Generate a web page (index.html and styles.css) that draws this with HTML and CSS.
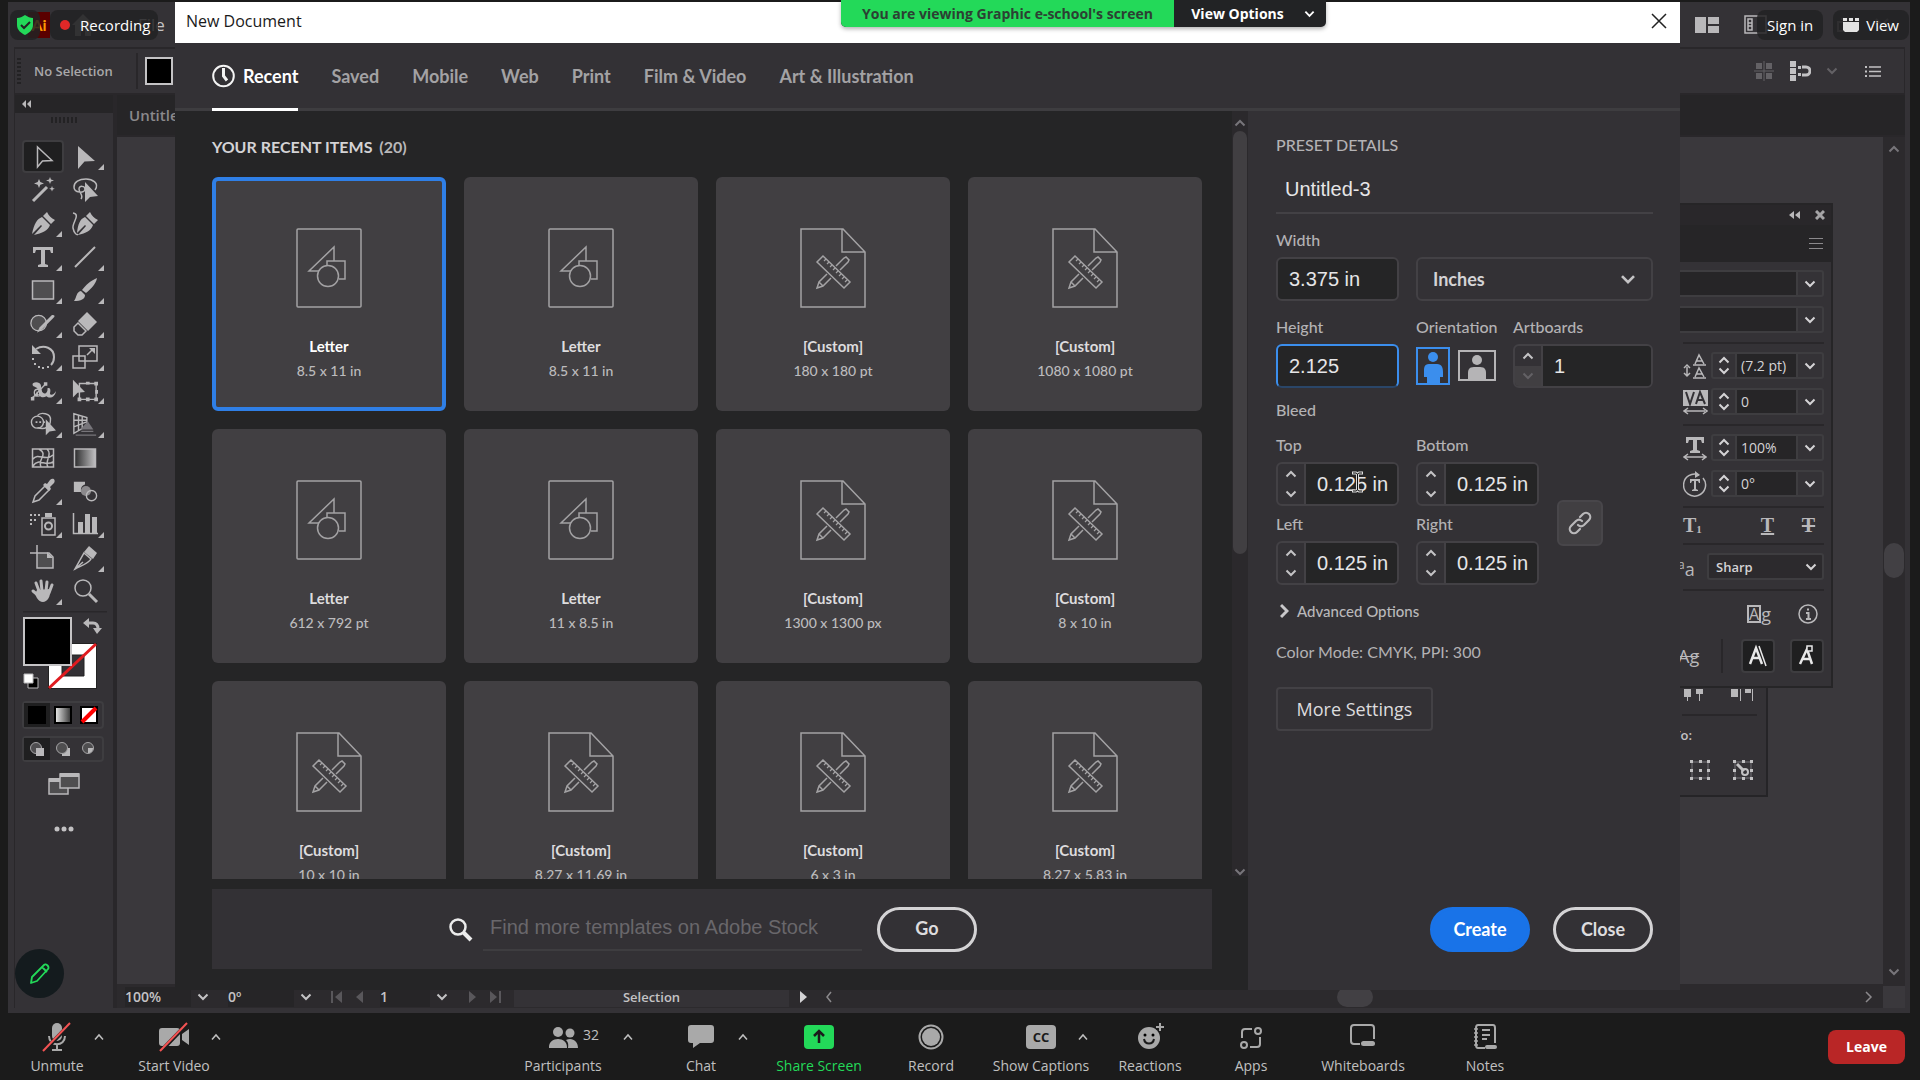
FILE: index.html
```html
<!DOCTYPE html>
<html lang="en">
<head>
<meta charset="utf-8">
<title>New Document</title>
<link rel="stylesheet" href="styles.css">
</head>
<body>
<svg class="sprite" aria-hidden="true">
  <symbol id="up" viewBox="0 0 12 8"><path d="M1.500 6.500 6 2l4.500 4.500" fill="none" stroke="currentColor" stroke-width="2"/></symbol>
  <symbol id="down" viewBox="0 0 12 8"><path d="M1.500 1.500 6 6l4.500-4.500" fill="none" stroke="currentColor" stroke-width="2"/></symbol>
  <symbol id="letter" viewBox="0 0 66 80"><g fill="none" stroke="#a3a2a4" stroke-width="1.500"><rect x="1" y="1" width="64" height="78" rx="1"/><path d="M23 43H13L38 19v14M43 51h6V33H31v5"/><circle cx="32" cy="48" r="10.500"/></g></symbol>
  <symbol id="custom" viewBox="0 0 66 80"><g fill="none" stroke="#a3a2a4" stroke-width="1.500"><path d="M1 1h42l22 23v55H1zM42 1v23h23"/><path d="m17 34 6-6 27 26-6 6z"/><path d="m26 31-2 2m5 1-2 2m5 1-2 2m5 1-2 2m5 1-2 2m5 1-2 2m5 1-2 2m5 1-2 2" stroke-width="1.200"/><path d="m36 38 8-8 2-1 3 3-1 2-8 8M27 46l-8 8-2 6 6-2 8-8M19 54l4 4"/></g></symbol>
  <symbol id="caret" viewBox="0 0 12 8"><path d="M2 6.500 6 2l4 4.500" fill="none" stroke="currentColor" stroke-width="1.500"/></symbol>
</svg>

<main class="share">
  <div class="app">
    <header class="app-head">
      <span class="ai">Ai</span>
      <svg class="home" viewBox="0 0 22 24" width="22" height="24"><path d="M11 1 0 12h3v11h6v-8h4v8h6V12h3z" fill="#8d8b8e"/></svg>
      <a class="file" href="#">File</a>
      <div class="head-right">
        <svg width="24" height="18" viewBox="0 0 24 18" fill="#b9b8ba"><path d="M0 1h11v16H0zM13 1h11v7H13zM13 10h11v7H13z"/></svg>
        <svg class="ml25" width="23" height="20" viewBox="0 0 23 20" fill="none" stroke="#b9b8ba" stroke-width="1.500"><path d="M22 1H1v17h21z"/><path d="M4 4h4v11H4zM4 8h4M4 11h4"/></svg>
        <svg class="win" width="94" height="16" viewBox="0 0 94 16" fill="none" stroke="#77757a" stroke-width="2"><path d="M1 9h13M41 5h10v9H41zM44 2h10v9M79 2l12 12M91 2 79 14"/></svg>
      </div>
    </header>

    <div class="control">
      <span class="grip-v"></span><span class="nosel">No Selection</span><span class="vline"></span><button class="fillbox" aria-label="Fill"></button>
      <div class="ctl-right">
        <svg width="20" height="20" viewBox="0 0 20 20" fill="#636165"><path d="M2 2h6v6H2zM12 2h6v6h-6zM2 12h6v6H2zM12 12h6v6h-6z"/><path d="M10 0v20M0 10h20" stroke="#636165"/></svg>
        <svg width="22" height="20" viewBox="0 0 22 20" fill="#c2c1c3"><path d="M1 0h6v6H1zM1 7h6v6H1zM1 14h6v6H1z"/><path d="M13 6h4a4 4 0 0 1 0 8h-4" fill="none" stroke="#c2c1c3" stroke-width="3"/><path d="M9 5h3v3H9zM9 12h3v3H9z"/></svg>
        <svg class="dim" width="12" height="8"><use href="#down"/></svg>
        <svg class="ml20" width="17" height="13" viewBox="0 0 17 13"><path d="M4 2h12M4 6.500h12M4 11h12" stroke="#c2c1c3" stroke-width="1.500"/><path d="M0 1h2v2H0zM0 5.500h2v2H0zM0 10h2v2H0z" fill="#c2c1c3"/></svg>
      </div>
    </div>

    <div class="work">
      <aside class="tools">
        <div class="tools-top"><svg width="10" height="8" viewBox="0 0 10 8" fill="#b9b8ba"><path d="M4 0v8L0 4zM9 0v8L5 4z"/></svg></div>
        <span class="grip-h"></span>
        <div class="toolgrid">
          <button class="tool on" aria-label="Selection"><svg viewBox="0 0 26 26"><path d="M7.500 3v20l5-6 9.500-.5z" class="l"/></svg></button>
          <button class="tool fly" aria-label="Direct selection"><svg viewBox="0 0 26 26"><path d="M6 2v23l6.500-7.500L23 17z"/></svg></button>
          <button class="tool" aria-label="Magic wand"><svg viewBox="0 0 26 26"><path d="M3 24 17 10" class="l w3"/><path d="m9 2 1.300 3L14 6.500l-3.700 1.300L9 11l-1.300-3.200L4 6.500 7.700 5zM20 0l1 2.500 3 1-3 1L20 7l-1-2.500-3-1 3-1zM22 9l.8 2 2 .8-2 .8-.8 2-.8-2-2-.8 2-.8z"/></svg></button>
          <button class="tool" aria-label="Lasso"><svg viewBox="0 0 26 26"><path d="M23 13c5-7-3-11-9-11C7 2 2 5 2 10c0 6 11 7 11 2 0-3-6-4-6 0s5 6 2 10" class="l"/><path d="M13 5v20l5-5 8-1z"/></svg></button>
          <button class="tool fly" aria-label="Pen"><svg viewBox="0 0 26 26"><path d="M17 1c2 4 4 6 8 8l-4 4-8-8zM12 6l8 8c-2 6-8 8-16 10l8-9-1-1-9 9C4 13 7 8 12 6z"/></svg></button>
          <button class="tool" aria-label="Curvature"><svg viewBox="0 0 26 26"><path d="M18 1c2 4 4 6 8 8l-4 4-8-8zM13 6l8 8c-2 6-7 8-15 10l8-9-1-1-8 8C6 13 8 8 13 6z"/><path d="M1 2c8 1-1 10 0 15s4 8 5 6" class="l"/></svg></button>
          <button class="tool fly" aria-label="Type"><svg viewBox="0 0 26 26"><path d="M3 3h20v6h-2l-1-3h-5v14l3 1v2H8v-2l3-1V6H6L5 9H3z"/></svg></button>
          <button class="tool fly" aria-label="Line"><svg viewBox="0 0 26 26"><path d="M3 23 23 3" class="l w2"/></svg></button>
          <button class="tool fly" aria-label="Rectangle"><svg viewBox="0 0 26 26"><path d="M2.500 4h21v18h-21z" class="l g"/></svg></button>
          <button class="tool fly" aria-label="Brush"><svg viewBox="0 0 26 26"><path d="M25 1c-1 6-6 11-11 15l-4-3c4-5 8-9 15-12zM9 14l4 4c0 4-4 6-11 6 3-4 2-9 7-10z"/></svg></button>
          <button class="tool fly" aria-label="Shaper"><svg viewBox="0 0 30 26"><circle cx="10" cy="12" r="9" class="l g"/><path d="M28 5 14 19l-6 4 3-6L25 3c2-1 4 0 3 2z"/></svg></button>
          <button class="tool fly" aria-label="Eraser"><svg viewBox="0 0 26 26"><path d="m15 1 10 10-9 9L6 10z"/><path d="m6 12 8 8-4 4H6l-4-4v-4z" class="l"/></svg></button>
          <button class="tool fly" aria-label="Rotate"><svg viewBox="0 0 26 26"><path d="M6 5c8-5 18-1 18 8 0 4-1 6-3 8" class="l w2"/><path d="M2 1v9h9zM2 14h2v2H2zM4 19h2v2H4zM8 22h2v2H8zM12 23h2v2h-2zM17 22h2v2h-2z"/></svg></button>
          <button class="tool fly" aria-label="Scale"><svg viewBox="0 0 26 26"><path d="M7 2h18v15H7zM1 12h12v12H1zM15 11l5-5" class="l"/><path d="M17 4h6v6z"/></svg></button>
          <button class="tool fly" aria-label="Width"><svg viewBox="0 0 30 26"><path d="M3 19c9 2 8-4 6-8S4 9 3 6s5-4 8-2 1 8 4 11 6-2 5-5c4-2 4 3 3 6 1 3 5 1 7-3-1 8-8 9-11 6-6 4-10-2-11-6-1 5-2 7-5 7z"/><circle cx="9" cy="15" r="4" class="l"/><path d="m2 22 16-17" class="l"/><path d="M1 20h4v4H1zM16 3h4v4h-4z"/></svg></button>
          <button class="tool fly" aria-label="Free transform"><svg viewBox="0 0 28 26"><path d="M8 5h18v17H8z" class="l"/><path d="M1 1v19l5-5 8-1zM24 3h4v4h-4zM24 20h4v4h-4zM15 3h4v3h-4zM15 20h4v4h-4zM6 20h4v4H6zM25 12h3v4h-3z"/></svg></button>
          <button class="tool fly" aria-label="Shape builder"><svg viewBox="0 0 28 26"><circle cx="8" cy="11" r="6.500" class="l"/><path d="M8 4c3-4 15-3 14 5 0 6-5 11-14 8" class="l"/><path d="M6 10h2v2H6zM10 10h2v2h-2zM14 10h2v2h-2zM17 8v17l4-4 7-1z"/></svg></button>
          <button class="tool fly" aria-label="Perspective grid"><svg viewBox="0 0 28 26"><path d="M2 2v21l14-8V6zM2 9h14M2 16l13-5M7 3v17M11 4v14" class="l"/><path d="M17 10 9 19h14z" fill="#77757a"/><path d="M10 21h13M4 25h22" stroke="#77757a" stroke-width="1.500"/></svg></button>
          <button class="tool" aria-label="Mesh"><svg viewBox="0 0 26 26"><path d="M2.500 4h21v18h-21zM3 14c5-7 13 3 20-4M3 21c6-9 12 1 20-4M9 4c10 6-2 10 2 18M17 4c6 6-3 12 1 18" class="l"/></svg></button>
          <button class="tool" aria-label="Gradient"><svg viewBox="0 0 26 26"><defs><linearGradient id="gr"><stop stop-color="#2b2b2c"/><stop offset="1" stop-color="#c2c1c3"/></linearGradient></defs><path d="M2.500 4h21v18h-21z" fill="url(#gr)" stroke="#b9b8ba" stroke-width="1.500"/></svg></button>
          <button class="tool fly" aria-label="Eyedropper"><svg viewBox="0 0 26 26"><path d="m15 8 4 4L9 22l-6 2 2-6z" class="l"/><path d="m13 7 2-2 2 1 3-4c3-3 6 0 4 3l-4 4 1 2-2 2z"/></svg></button>
          <button class="tool" aria-label="Blend"><svg viewBox="0 0 28 26"><path d="M2 3h12v3c-4 1-5 5-4 8H2z"/><circle cx="15" cy="13" r="5.500" fill="#8b898c"/><circle cx="21" cy="18" r="5.500" class="l"/></svg></button>
          <button class="tool fly" aria-label="Symbol sprayer"><svg viewBox="0 0 26 26"><path d="M12 7h13v17H12z" class="l"/><path d="M15 2h7v4h-7zM0 3h2v2H0zM4 3h2v2H4zM8 3h2v2H8zM0 8h2v2H0zM4 8h2v2H4zM0 12h2v2H0z"/><circle cx="18.500" cy="15" r="3.500" class="l w2"/></svg></button>
          <button class="tool fly" aria-label="Graph"><svg viewBox="0 0 26 26"><path d="M1.500 2v20.500H26" class="l"/><path d="M6 11h5v11H6zM13 3h5v19h-5zM20 6h5v16h-5z"/></svg></button>
          <button class="tool" aria-label="Artboard"><svg viewBox="0 0 26 26"><path d="M7 8h12l4 4v11H7z" class="l g"/><path d="M0 8h7M7 0v8" class="l"/><path d="M17 7v6h6z"/></svg></button>
          <button class="tool fly" aria-label="Slice"><svg viewBox="0 0 26 26"><path d="m12 8 7 6c-2 4-8 6-16 10L12 8zM3 24l8-7" class="l"/><path d="M17 1 25 8l-4 6-9-7z"/></svg></button>
          <button class="tool fly" aria-label="Hand"><svg viewBox="0 0 26 26"><path d="M9 13 6 5" class="l w3 r"/><path d="M12 13 11 3M16 13l1-9M19 15l3-8M9 18l-6-5" class="l w3 r"/><path d="m7 12 13-1c1 8-3 13-7 13-5 0-7-6-8-8z"/></svg></button>
          <button class="tool" aria-label="Zoom"><svg viewBox="0 0 26 26"><circle cx="11" cy="10" r="8" class="l"/><path d="m17 16 8 8" class="l w3"/></svg></button>
        </div>
        <svg class="swatches" viewBox="0 0 84 78" width="84" height="78">
          <path d="M0 0h84" stroke="#29272a" stroke-width="3"/>
          <path d="M25 32h49v46H25z" fill="#222"/><path d="M26 33h47v44H26z" fill="#fff"/><path d="M39 44h22v21H39z" fill="#333135" stroke="#222"/><path d="M26 77 73 33" stroke="#e01b1f" stroke-width="3"/>
          <path d="M1 7h47v47H1z" fill="#000" stroke="#c5c4c6" stroke-width="2"/>
          <path d="M64 12h6c4 0 5 3 5 6" fill="none" stroke="#b9b8ba" stroke-width="3"/><path d="M60 12l6-5v10zM70 17h9l-5 6z" fill="#b9b8ba"/>
          <path d="M5 67h10v10H5z" fill="#000" stroke="#b9b8ba" stroke-width="1"/><path d="M1 63h9v9H1z" fill="#fff" stroke="#b9b8ba"/>
        </svg>
        <div class="seg seg-color">
          <button class="on" aria-label="Color"><svg width="18" height="18"><path d="M0 0h18v18H0z" fill="#000"/></svg></button>
          <button aria-label="Gradient fill"><svg width="18" height="18"><defs><linearGradient id="gw"><stop stop-color="#eee"/><stop offset="1" stop-color="#333"/></linearGradient></defs><path d="M1 1h16v16H1z" fill="url(#gw)" stroke="#000" stroke-width="2"/></svg></button>
          <button aria-label="None"><svg width="18" height="18"><path d="M1 1h16v16H1z" fill="#fff" stroke="#000" stroke-width="2"/><path d="M2 16 16 2" stroke="#f00" stroke-width="4"/></svg></button>
        </div>
        <div class="seg seg-draw">
          <button class="on" aria-label="Draw normal"><svg width="16" height="16"><circle cx="7" cy="7" r="5.500" fill="#4f4e50" stroke="#a5a4a6"/><path d="M7 7h8v8H7z" fill="#b9b8ba"/></svg></button>
          <button aria-label="Draw behind"><svg width="16" height="16"><path d="M7 7h8v8H7z" fill="#b9b8ba"/><circle cx="7" cy="7" r="5.500" fill="#4f4e50" stroke="#a5a4a6"/></svg></button>
          <button aria-label="Draw inside"><svg width="16" height="16"><circle cx="7" cy="7" r="5.500" fill="#4f4e50" stroke="#a5a4a6"/><path d="M7 7h5c0 3-2 5-5 5z" fill="#b9b8ba"/></svg></button>
        </div>
        <button class="screenmode" aria-label="Screen mode"><svg width="32" height="24" viewBox="0 0 32 24"><path d="M1 7h19v15H1z" fill="#4f4e50" stroke="#b9b8ba" stroke-width="1.500"/><path d="M1 6h19v4H1z" fill="#b9b8ba"/><path d="M12 2h19v14H12z" fill="#4f4e50" stroke="#b9b8ba" stroke-width="1.500"/><path d="M12 1h19v4H12z" fill="#b9b8ba"/></svg></button>
        <button class="dots" aria-label="Edit toolbar"><svg width="20" height="6" fill="#c2c1c3"><circle cx="3" cy="3" r="2.500"/><circle cx="10" cy="3" r="2.500"/><circle cx="17" cy="3" r="2.500"/></svg></button>
      </aside>

      <section class="doc">
        <div class="doc-tabs">Untitled-2</div>
        <div class="doc-main">
          <div class="canvas"></div>
          <div class="vscroll"><svg class="dim2" width="12" height="8"><use href="#up"/></svg><span></span><svg class="dim2" width="12" height="8"><use href="#down"/></svg></div>
        </div>
        <footer class="status">
          <input class="s-zoom" value="100%" aria-label="Zoom level"><button class="s-dd" aria-label="Zoom list"><svg width="12" height="8"><use href="#down"/></svg></button>
          <input class="s-rot" value="0º" aria-label="Rotation"><button class="s-dd" aria-label="Rotation list"><svg width="12" height="8"><use href="#down"/></svg></button>
          <svg class="s-nav" width="62" height="14" fill="#59575b"><path d="M13 1h2v12h-2zM24 1v12l-7-6zM45 1v12l-7-6z"/></svg>
          <input class="s-page" value="1" aria-label="Artboard number"><button class="s-dd" aria-label="Artboard list"><svg width="12" height="8"><use href="#down"/></svg></button>
          <svg class="s-nav" width="60" height="14" fill="#59575b"><path d="M15 1v12l7-6zM36 1v12l7-6zM45 1h2v12h-2z"/></svg>
          <span class="s-label">Selection</span>
          <svg width="28" height="14" fill="#d4d3d5"><path d="M11 1v12l7-6z"/></svg>
          <svg width="24" height="14" fill="none" stroke="#8b898c" stroke-width="1.500"><path d="m14 2-4 5 4 5"/></svg>
          <span class="hthumb"></span>
          <svg width="14" height="14" fill="none" stroke="#8b898c" stroke-width="1.500"><path d="m5 2 5 5-5 5"/></svg>
          <span class="corner"></span>
        </footer>
      </section>
    </div>
  </div>

  <section class="align-panel">
    <svg width="76" height="12" fill="#b9b8ba"><path d="M2 0h7v8H2zM5 8h1v4H5zM14 0h7v5h-7zM17 5h1v7h-1zM49 0h7v8h-7zM58 0h1v12h-1zM63 0h6v4h-6zM70 0h1v12h-1z"/></svg>
    <hr>
    <span class="alignto">Align To:</span>
    <div class="align-row">
      <svg width="20" height="20" viewBox="0 0 20 20"><path d="M2 2h16v16H2z" fill="none" stroke="#77757a"/><path d="M0 0h3v3H0zM9 0h3v3H9zM17 0h3v3h-3zM0 9h3v3H0zM9 9h3v3H9zM17 9h3v3h-3zM0 17h3v3H0zM9 17h3v3H9zM17 17h3v3h-3z" fill="#c2c1c3"/></svg>
      <svg width="20" height="20" viewBox="0 0 20 20"><path d="M2 2h16v16H2z" fill="none" stroke="#77757a"/><path d="M0 0h3v3H0zM9 0h3v3H9zM17 0h3v3h-3zM0 9h3v3H0zM17 9h3v3h-3zM0 17h3v3H0zM9 17h3v3H9zM17 17h3v3h-3z" fill="#c2c1c3"/><path d="m4 4 7 7" stroke="#c2c1c3" stroke-width="3"/><circle cx="12" cy="12" r="3" fill="none" stroke="#c2c1c3" stroke-width="2"/></svg>
    </div>
  </section>

  <section class="char-panel">
    <div class="cp-top"><svg width="11" height="8" viewBox="0 0 11 8" fill="#b9b8ba"><path d="M5 0v8L0 4zM11 0v8L6 4z"/></svg><svg width="10" height="10" viewBox="0 0 10 10" stroke="#a5a4a6" stroke-width="3"><path d="m1 1 8 8M9 1 1 9"/></svg></div>
    <div class="cp-tabs"><svg width="14" height="11" stroke="#8b898c"><path d="M0 .5h14M0 5.500h14M0 10.500h14"/></svg></div>
    <div class="cp-body">
      <div class="combo wide"><input aria-label="Font family"><button aria-label="Font family list"><svg width="12" height="8"><use href="#down"/></svg></button></div>
      <div class="combo wide"><input aria-label="Font style"><button aria-label="Font style list"><svg width="12" height="8"><use href="#down"/></svg></button></div>
      <hr>
      <div class="cp-row"><svg width="24" height="26" fill="none" stroke="#b9b8ba" stroke-width="1.500"><path d="M10 12h13M10 25h13M12 11l4-9 5 9M13 8h7M12 24l4-9 5 9M13 21h7M4 14v8M1 15l3-3 3 3M1 20l3 3 3-3"/></svg>
        <div class="combo"><span class="arr"><button aria-label="More leading"><svg width="12" height="8"><use href="#up"/></svg></button><button aria-label="Less leading"><svg width="12" height="8"><use href="#down"/></svg></button></span><input value="(7.2 pt)" aria-label="Leading"><button aria-label="Leading list"><svg width="12" height="8"><use href="#down"/></svg></button></div></div>
      <div class="cp-row"><svg width="25" height="26" fill="none" stroke="#b9b8ba" stroke-width="1.500"><path d="M0 1h25v16H0z" fill="#b9b8ba" stroke="none"/><path d="m3 3 4 12 4-12M13 15l4-12 5 12M14 11h6" stroke="#333135" stroke-width="2"/><path d="M2 22h20M5 19l-4 3 4 3M20 19l4 3-4 3"/></svg>
        <div class="combo"><span class="arr"><button aria-label="More tracking"><svg width="12" height="8"><use href="#up"/></svg></button><button aria-label="Less tracking"><svg width="12" height="8"><use href="#down"/></svg></button></span><input value="0" aria-label="Tracking"><button aria-label="Tracking list"><svg width="12" height="8"><use href="#down"/></svg></button></div></div>
      <hr>
      <div class="cp-row"><svg width="24" height="26" fill="#b9b8ba"><path d="M3 2h18v6h-2l-1-3h-4v10l3 1v2H7v-2l3-1V5H6L5 8H3z"/><path d="M2 22h20M5 19l-4 3 4 3M19 19l4 3-4 3" fill="none" stroke="#b9b8ba" stroke-width="1.500"/></svg>
        <div class="combo"><span class="arr"><button aria-label="Wider"><svg width="12" height="8"><use href="#up"/></svg></button><button aria-label="Narrower"><svg width="12" height="8"><use href="#down"/></svg></button></span><input value="100%" aria-label="Horizontal scale"><button aria-label="Scale list"><svg width="12" height="8"><use href="#down"/></svg></button></div></div>
      <div class="cp-row"><svg width="24" height="26" fill="#b9b8ba"><path d="M7 8h10v4h-1l-1-2h-2v8l2 1v1H9v-1l2-1v-8H9l-1 2H7z"/><path d="M16 4A11 11 0 1 0 20 7" fill="none" stroke="#b9b8ba" stroke-width="1.500"/><path d="M12 0v7l5-3z"/></svg>
        <div class="combo"><span class="arr"><button aria-label="Rotate up"><svg width="12" height="8"><use href="#up"/></svg></button><button aria-label="Rotate down"><svg width="12" height="8"><use href="#down"/></svg></button></span><input value="0°" aria-label="Character rotation"><button aria-label="Rotation angles"><svg width="12" height="8"><use href="#down"/></svg></button></div></div>
      <hr>
      <div class="cp-type"><button aria-label="Subscript">T<sub>1</sub></button><button class="und" aria-label="Underline">T</button><button class="strike" aria-label="Strikethrough">T</button></div>
      <hr>
      <div class="cp-aa"><span class="aa"><sup>a</sup>a</span><span class="selwrap sharp"><select aria-label="Anti-aliasing"><option>Sharp</option></select><svg width="12" height="8"><use href="#down"/></svg></span></div>
      <hr>
      <div class="cp-snap"><span class="ag"><b>A</b>g</span><svg width="20" height="20" fill="none" stroke="#b9b8ba" stroke-width="1.500"><circle cx="10" cy="10" r="9"/><path d="M8 9h2.500v6M8 15h5M9 5.500h2" stroke-width="2"/></svg></div>
      <div class="cp-glyph"><span class="ag2">Ag</span><i></i><button aria-label="Snap to angular guides"><svg width="22" height="24" fill="none" stroke="#e8e8e8" stroke-width="2.500"><path d="m3 20 6-16 6 16M5 14h8"/><path d="m12 2 7 20" stroke-width="1.500"/></svg></button><button aria-label="Snap to anchor"><svg width="22" height="24" fill="none" stroke="#e8e8e8" stroke-width="2.500"><path d="m4 20 7-15 5 15M7 15h8"/><path d="M11 2h5v5h-5z" fill="#1f1f20" stroke-width="1.500"/></svg></button></div>
    </div>
  </section>

  <section class="dialog" role="dialog" aria-label="New Document">
    <div class="d-title"><span>New Document</span><button aria-label="Close dialog"><svg width="16" height="16" stroke="#222" stroke-width="1.500"><path d="m1 1 14 14M15 1 1 15"/></svg></button></div>
    <nav class="d-tabs">
      <a class="active" href="#"><svg width="23" height="24" viewBox="0 0 23 24" fill="none" stroke="#f4f4f4" stroke-width="2"><circle cx="11.500" cy="12" r="10.300"/><path d="M11.500 4v8l3.500 4.500" stroke-width="3"/></svg>Recent</a>
      <a href="#">Saved</a><a href="#">Mobile</a><a href="#">Web</a><a href="#">Print</a><a href="#">Film &amp; Video</a><a href="#">Art &amp; Illustration</a>
    </nav>
    <div class="d-body">
      <div class="d-left">
        <div class="recent">
          <h2>YOUR RECENT ITEMS <span>(20)</span></h2>
          <div class="cards">
            <button class="card sel"><svg width="66" height="80"><use href="#letter"/></svg><b>Letter</b><span>8.5 x 11 in</span></button>
            <button class="card"><svg width="66" height="80"><use href="#letter"/></svg><b>Letter</b><span>8.5 x 11 in</span></button>
            <button class="card"><svg width="66" height="80"><use href="#custom"/></svg><b>[Custom]</b><span>180 x 180 pt</span></button>
            <button class="card"><svg width="66" height="80"><use href="#custom"/></svg><b>[Custom]</b><span>1080 x 1080 pt</span></button>
            <button class="card"><svg width="66" height="80"><use href="#letter"/></svg><b>Letter</b><span>612 x 792 pt</span></button>
            <button class="card"><svg width="66" height="80"><use href="#letter"/></svg><b>Letter</b><span>11 x 8.5 in</span></button>
            <button class="card"><svg width="66" height="80"><use href="#custom"/></svg><b>[Custom]</b><span>1300 x 1300 px</span></button>
            <button class="card"><svg width="66" height="80"><use href="#custom"/></svg><b>[Custom]</b><span>8 x 10 in</span></button>
            <button class="card"><svg width="66" height="80"><use href="#custom"/></svg><b>[Custom]</b><span>10 x 10 in</span></button>
            <button class="card"><svg width="66" height="80"><use href="#custom"/></svg><b>[Custom]</b><span>8.27 x 11.69 in</span></button>
            <button class="card"><svg width="66" height="80"><use href="#custom"/></svg><b>[Custom]</b><span>6 x 3 in</span></button>
            <button class="card"><svg width="66" height="80"><use href="#custom"/></svg><b>[Custom]</b><span>8.27 x 5.83 in</span></button>
          </div>
          <form class="stock">
            <svg width="26" height="26" fill="none" stroke="#ececec"><circle cx="11" cy="11" r="7.500" stroke-width="2.500"/><path d="m16 16 8 8" stroke-width="4"/></svg>
            <input type="text" placeholder="Find more templates on Adobe Stock" aria-label="Find templates">
            <button type="button" class="pill">Go</button>
          </form>
        </div>
        <div class="lscroll"><svg class="dim2" width="12" height="8"><use href="#up"/></svg><span></span><svg class="dim2" width="12" height="8"><use href="#down"/></svg></div>
      </div>

      <form class="preset">
        <h2>PRESET DETAILS</h2>
        <input class="docname" type="text" value="Untitled-3" aria-label="Document name">
        <div class="frow r1">
          <div class="fld"><label for="w">Width</label><input id="w" class="box" value="3.375 in"></div>
          <span class="selwrap units"><select aria-label="Units"><option>Inches</option></select><svg width="16" height="11"><use href="#down"/></svg></span>
        </div>
        <div class="frow r2">
          <div class="fld"><label for="h">Height</label><input id="h" class="box focus" value="2.125"></div>
          <div class="orient"><span class="lab">Orientation</span><div>
            <button type="button" aria-label="Portrait"><svg width="34" height="38"><path d="M1 1h32v36H1z" fill="none" stroke="#3b8eed" stroke-width="2"/><circle cx="17" cy="10" r="5" fill="#3b8eed"/><path d="M13 17h8c5 0 6 4 6 8v5h-3v7H11v-7H8v-5c0-4 0-8 5-8z" fill="#3b8eed"/></svg></button>
            <button type="button" aria-label="Landscape"><svg width="38" height="32"><path d="M1 1h36v29H1z" fill="none" stroke="#b5b4b6" stroke-width="2"/><circle cx="19" cy="10" r="5" fill="#b5b4b6"/><path d="M16 17h6c5 0 6 3 6 6v7H10v-7c0-3 1-6 6-6z" fill="#b5b4b6"/></svg></button></div></div>
          <div class="fld boards"><label for="ab">Artboards</label><div class="spin"><span class="arr"><button type="button" aria-label="More artboards"><svg width="12" height="8"><use href="#up"/></svg></button><button type="button" class="off" aria-label="Fewer artboards" disabled><svg width="12" height="8"><use href="#down"/></svg></button></span><input id="ab" value="1"></div></div>
        </div>
        <span class="lab bleed">Bleed</span>
        <div class="bleeds">
          <div class="bgrid">
            <div class="fld"><label for="bt">Top</label><div class="spin"><span class="arr"><button type="button" aria-label="Top up"><svg width="12" height="8"><use href="#up"/></svg></button><button type="button" aria-label="Top down"><svg width="12" height="8"><use href="#down"/></svg></button></span><input id="bt" value="0.125 in"></div></div>
            <div class="fld"><label for="bb">Bottom</label><div class="spin"><span class="arr"><button type="button" aria-label="Bottom up"><svg width="12" height="8"><use href="#up"/></svg></button><button type="button" aria-label="Bottom down"><svg width="12" height="8"><use href="#down"/></svg></button></span><input id="bb" value="0.125 in"></div></div>
            <div class="fld"><label for="bl">Left</label><div class="spin"><span class="arr"><button type="button" aria-label="Left up"><svg width="12" height="8"><use href="#up"/></svg></button><button type="button" aria-label="Left down"><svg width="12" height="8"><use href="#down"/></svg></button></span><input id="bl" value="0.125 in"></div></div>
            <div class="fld"><label for="br">Right</label><div class="spin"><span class="arr"><button type="button" aria-label="Right up"><svg width="12" height="8"><use href="#up"/></svg></button><button type="button" aria-label="Right down"><svg width="12" height="8"><use href="#down"/></svg></button></span><input id="br" value="0.125 in"></div></div>
          </div>
          <button type="button" class="link" aria-label="Link bleed values"><svg width="24" height="24" viewBox="0 0 24 24" fill="none" stroke="#b9b8ba" stroke-width="2.200" stroke-linecap="round"><path d="M10 14a4.500 4.500 0 0 0 6 0l5-5a4.200 4.200 0 0 0-6-6l-3 3"/><path d="M14 10a4.500 4.500 0 0 0-6 0l-5 5a4.200 4.200 0 0 0 6 6l3-3"/></svg></button>
          <svg class="ibeam" width="13" height="22" fill="none" stroke="#ddd" stroke-width="3"><path d="M1 2h4l1.500 1L8 2h4M6.500 3v16M1 20h4l1.500-1L8 20h4"/><path d="M2 2h3l1.500 1L8 2h3M6.500 3v16M2 20h3l1.500-1L8 20h3" stroke="#111" stroke-width="1"/></svg>
        </div>
        <button type="button" class="adv"><svg width="9" height="16" fill="none" stroke="#c9c8ca" stroke-width="3"><path d="m1 2 6 6-6 6"/></svg>Advanced Options</button>
        <p class="mode">Color Mode: CMYK, PPI: 300</p>
        <button type="button" class="more">More Settings</button>
        <div class="actions"><button type="button" class="pill blue">Create</button><button type="button" class="pill">Close</button></div>
      </form>
    </div>
  </section>

  <div class="banner"><span>You are viewing Graphic e-school's screen</span><button>View Options<svg width="11" height="8"><use href="#down"/></svg></button></div>
  <div class="chips left"><span class="chip shield"><svg width="18" height="20" viewBox="0 0 18 20"><path d="M9 0c3 2 5 3 8 3v7c0 5-4 8-8 10-4-2-8-5-8-10V3c3 0 5-1 8-3z" fill="#23d959"/><path d="m5 10 3 3 6-6" fill="none" stroke="#222" stroke-width="2"/></svg></span><span class="chip rec"><i></i>Recording</span></div>
  <div class="chips right"><a class="chip" href="#">Sign in</a><button class="chip"><svg width="16" height="14" fill="#e3e3e3"><path d="M0 0h4v3H0zM6 0h4v3H6zM12 0h4v3h-4zM0 4h16v8l-2 2H2l-2-2z"/></svg>View</button></div>
  <button class="annotate" aria-label="Annotate"><svg width="22" height="22" viewBox="0 0 22 22" fill="none" stroke="#23d959" stroke-width="1.800" stroke-linejoin="round"><path d="M2 20l1-6L15 2c2-2 6 2 4 4L8 18zM13 4l5 5"/></svg></button>
</main>

<nav class="meet">
  <div class="mi wa"><button class="main"><svg width="30" height="30" viewBox="0 0 30 30"><path d="M15 1a5 5 0 0 1 5 5v8a5 5 0 0 1-10 0V6a5 5 0 0 1 5-5z" fill="#a9a9a9"/><path d="M7 14c0 11 16 11 16 0M15 22v5M10 28h10" fill="none" stroke="#a9a9a9" stroke-width="2"/><path d="M1 30 29 1" stroke="#1b1b1b" stroke-width="4"/><path d="M1 29 28 1" stroke="#f35353" stroke-width="2"/></svg><span>Unmute</span></button><button class="car" aria-label="Audio options"><svg width="12" height="8"><use href="#caret"/></svg></button></div>
  <div class="mi wb"><button class="main"><svg width="30" height="30" viewBox="0 0 30 30"><path d="M3 6h15q3 0 3 3v12q0 3-3 3H3q-3 0-3-3V9q0-3 3-3zM23 12l7-5v16l-7-5z" fill="#a9a9a9"/><path d="M1 30 29 1" stroke="#1b1b1b" stroke-width="4"/><path d="M1 29 28 1" stroke="#f35353" stroke-width="2"/></svg><span>Start Video</span></button><button class="car" aria-label="Video options"><svg width="12" height="8"><use href="#caret"/></svg></button></div>
  <div class="mid">
    <div class="mi w1"><button class="main"><svg width="30" height="30" viewBox="0 0 30 30" fill="#a9a9a9"><circle cx="10" cy="10" r="5"/><circle cx="22" cy="11" r="4.500"/><path d="M1 26c-1-12 19-12 18 0zM20 26c1-5-1-7-2-8 6-3 12 1 12 8z"/></svg><span>Participants</span></button><span class="car cnt">32</span><button class="car far" aria-label="Participant options"><svg width="12" height="8"><use href="#caret"/></svg></button></div>
    <div class="mi w2"><button class="main"><svg width="30" height="30" viewBox="0 0 30 30"><path d="M5 3h20q3 0 3 3v12q0 3-3 3H14l-7 5v-5H5q-3 0-3-3V6q0-3 3-3z" fill="#a9a9a9"/></svg><span>Chat</span></button><button class="car" aria-label="Chat options"><svg width="12" height="8"><use href="#caret"/></svg></button></div>
    <div class="mi w3"><button class="main green"><svg width="30" height="30" viewBox="0 0 30 30"><rect y="3" width="30" height="24" rx="4" fill="#23d959"/><path d="M15 21V10M10 14l5-5 5 5" fill="none" stroke="#1b1b1b" stroke-width="2.500"/></svg><span>Share Screen</span></button></div>
    <div class="mi w4"><button class="main"><svg width="30" height="30" viewBox="0 0 30 30"><circle cx="15" cy="15" r="11.500" fill="none" stroke="#a9a9a9" stroke-width="2"/><circle cx="15" cy="15" r="9" fill="#a9a9a9"/></svg><span>Record</span></button></div>
    <div class="mi w5"><button class="main"><span class="cc">CC</span><span>Show Captions</span></button><button class="car" aria-label="Caption options"><svg width="12" height="8"><use href="#caret"/></svg></button></div>
    <div class="mi w6"><button class="main"><svg width="30" height="30" viewBox="0 0 30 30"><circle cx="14" cy="16" r="11" fill="#a9a9a9"/><path d="M26 0v10M21 5h9" stroke="#1b1b1b" stroke-width="6"/><path d="M25 1v8M21 5h8" stroke="#a9a9a9" stroke-width="2"/><circle cx="10" cy="13" r="1.500"/><circle cx="18" cy="13" r="1.500"/><path d="M9 17c1 6 9 6 10 0" fill="none" stroke="#1b1b1b" stroke-width="2"/></svg><span>Reactions</span></button></div>
    <div class="mi w7"><button class="main"><svg width="30" height="30" viewBox="0 0 30 30" fill="none" stroke="#a9a9a9" stroke-width="2"><path d="M6 16v-6q0-3 3-3h7M24 15v7q0 3-3 3h-7"/><circle cx="22" cy="9" r="3"/><circle cx="8" cy="23" r="3"/></svg><span>Apps</span></button></div>
    <div class="mi w8"><button class="main"><svg width="30" height="30" viewBox="0 0 30 30"><path d="M12 22H6q-3 0-3-3V6q0-3 3-3h17q3 0 3 3v11" fill="none" stroke="#a9a9a9" stroke-width="2"/><rect x="13" y="19" width="14" height="5" rx="2.500" fill="#a9a9a9"/></svg><span>Whiteboards</span></button></div>
    <div class="mi w9"><button class="main"><svg width="30" height="30" viewBox="0 0 30 30" fill="none" stroke="#a9a9a9" stroke-width="2"><path d="M15 26H8q-2 0-2-3V6q0-3 2-3h15q2 0 2 3v15M12 8h8M12 13h8M12 17h5"/><path d="M4 7h4M4 11h4M4 15h4M4 19h4M4 23h4" stroke-width="1.500"/><rect x="15" y="23" width="12" height="4" rx="2" fill="#a9a9a9" stroke="none"/></svg><span>Notes</span></button></div>
  </div>
  <button class="leave">Leave</button>
</nav>
</body>
</html>
```

FILE: styles.css
```css
* { box-sizing: border-box; }
body { margin: 0; min-height: 100vh; display: flex; flex-direction: column; background: #1b1b1b; color: #c4c3c5; font: 16px/20px Lato, "Noto Sans", sans-serif; }
button, input, select { font: inherit; color: inherit; margin: 0; padding: 0; border: 0; background: none; border-radius: 0; min-width: 0; }
button { display: flex; align-items: center; justify-content: center; }
input { outline: 0; }
a { color: inherit; text-decoration: none; }
h2, p { margin: 0; font-size: 16px; font-weight: 400; }
svg { display: block; flex: none; }
hr { border: 0; border-top: 2px solid #29272a; margin: 0; }
.sprite { position: absolute; width: 0; height: 0; }

/* shared screen */
.share { flex: 1; position: relative; display: flex; padding: 2px 10px 0 8px; overflow: hidden; }
.app { flex: 1; display: flex; flex-direction: column; background: #343236; padding: 0 5px 5px 6px; min-width: 0; }
.app-head { height: 45px; display: flex; align-items: center; color: #c4c3c5; }
.ai { margin-left: 14px; width: 22px; height: 26px; background: #5a0000; color: #ff9a00; font: bold 16px/26px Lato, sans-serif; text-align: center; }
.home { margin-left: 22px; }
.file { margin-left: 44px; font: 17px/24px "Open Sans", sans-serif; }
.head-right { margin-left: auto; display: flex; align-items: center; margin-right: 14px; }
.ml25 { margin-left: 25px; }
.ml20 { margin-left: 16px; }
.win { margin-left: 30px; }
.control { height: 48px; display: flex; align-items: center; border: 2px solid #29272a; border-width: 2px 1px; }
.grip-v { width: 4px; height: 27px; margin-left: 2px; background: repeating-linear-gradient(#232224 0 2px, #343236 2px 4px); }
.nosel { margin-left: 13px; width: 102px; font: 600 13px/20px "Open Sans", sans-serif; color: #a9a8aa; }
.vline { width: 2px; height: 36px; background: #29272a; }
.fillbox { margin-left: 7px; width: 28px; height: 28px; background: #000; border: 2px solid #c4c3c5; }
.ctl-right { margin-left: auto; display: flex; align-items: center; gap: 15px; margin-right: 22px; }
.ctl-right .ml20 { margin-left: 12px; }
.dim { color: #636165; }
.dim2 { color: #77757a; }
.work { flex: 1; display: flex; min-height: 0; }
.tools { width: 103px; border-right: 4px solid #29272a; border-left: 1px solid #29272a; display: flex; flex-direction: column; align-items: flex-start; }
.tools-top { align-self: stretch; height: 18px; background: #262527; padding: 5px 7px; }
.grip-h { align-self: center; width: 27px; height: 6px; margin-top: 4px; background: repeating-linear-gradient(90deg, #232224 0 2px, #343236 2px 4px); }
.toolgrid { margin: 17px 0 0 7px; display: grid; grid-template-columns: 42px 42px; grid-auto-rows: 1fr; height: 468px; }
.tool { position: relative; }
.tool svg { width: 26px; height: 26px; fill: #b9b8ba; overflow: visible; }
.tool .l { fill: none; stroke: #b9b8ba; stroke-width: 1.500; }
.tool .g { fill: #4f4e50; }
.tool .w2 { stroke-width: 2; }
.tool .w3 { stroke-width: 3; }
.tool .r { stroke-linecap: round; }
.tool.on { background: #1f1f20; border: 2px solid #3e3d40; border-radius: 4px; }
.fly::after { content: ""; position: absolute; right: 2px; bottom: 3px; border: 3px solid transparent; border-right-color: #b9b8ba; border-bottom-color: #b9b8ba; }
.swatches { margin: 3px 0 0 8px; }
.seg { display: flex; margin-left: 7px; width: 82px; border: 2px solid #3e3d40; border-radius: 4px; }
.seg button { flex: 1; }
.seg .on { background: #1f1f20; }
.seg-color { margin-top: 12px; height: 28px; }
.seg-draw { margin-top: 7px; height: 26px; }
.screenmode { margin: 10px 0 0 33px; }
.dots { margin: 30px 0 0 39px; }
.doc { flex: 1; display: flex; flex-direction: column; min-width: 0; }
.doc-tabs { height: 42px; background: #262527; padding-left: 12px; font: 600 15px/40px "Open Sans", sans-serif; color: #8b898c; border-bottom: 2px solid #29272a; }
.doc-main { flex: 1; display: flex; min-height: 0; }
.canvas { flex: 1; background: #3a383c; }
.vscroll { width: 22px; background: #2c2a2d; display: flex; flex-direction: column; align-items: center; justify-content: space-between; padding: 8px 0; }
.vscroll span { width: 20px; height: 35px; border-radius: 10px; background: #424044; }
.status { height: 24px; display: flex; align-items: center; background: #2c2a2d; font: 600 14px/20px "Open Sans", sans-serif; padding: 2px 0 0 8px; }
.status input { height: 20px; background: #262527; }
.s-zoom { width: 66px; }
.s-rot { width: 66px; margin-left: 13px; }
.s-page { width: 50px; }
.s-dd { width: 24px; height: 20px; }
.s-label { width: 275px; height: 20px; text-align: center; background: #343236; font-size: 13px; }
.hthumb { width: 36px; height: 20px; border-radius: 10px; background: #424044; margin: 0 auto 0 496px; }
.corner { width: 22px; height: 22px; margin-left: 8px; background: #3a383c; }

/* floating panels */
.align-panel { position: absolute; right: 152px; top: 600px; width: 138px; height: 197px; padding: 87px 9px 0 50px; background: #343236; border: 2px solid #252427; }
.align-panel hr { margin: 13px 0 9px; }
.alignto { display: block; margin-left: -46px; font: 600 13px/20px "Open Sans", sans-serif; width: 56px; text-align: right; }
.align-row { display: flex; gap: 23px; margin: 15px 0 0 8px; }
.char-panel { position: absolute; right: 87px; top: 203px; width: 213px; background: #343236; border: 2px solid #262527; }
.cp-top { height: 20px; background: #29272a; display: flex; justify-content: flex-end; align-items: center; gap: 15px; padding-right: 6px; }
.cp-tabs { height: 37px; background: #262527; display: flex; justify-content: flex-end; align-items: center; padding-right: 8px; }
.cp-body { padding: 8px 7px 13px 61px; display: flex; flex-direction: column; gap: 9px; font: 14px/20px "Open Sans", sans-serif; color: #d4d3d5; }
.cp-body hr { margin: 0 0 -1px; }
.combo { flex: 1; display: flex; height: 27px; border: 2px solid #3e3d40; border-radius: 3px; min-height: 27px; }
.wide { margin-left: -20px; }
.combo input { flex: 1; background: #262527; border: 0 solid #3e3d40; border-right-width: 2px; padding-left: 4px; width: 20px; }
.combo > button { width: 24px; }
.cp-row { display: flex; justify-content: space-between; align-items: center; }
.cp-row .combo { flex: none; width: 113px; }
.arr { display: flex; flex-direction: column; width: 24px; border-right: 2px solid #3e3d40; }
.arr button { flex: 1; }
.cp-type { height: 18px; display: flex; align-items: center; font: bold 20px/18px "Liberation Serif", serif; color: #b9b8ba; }
.cp-type sub { font-size: 11px; margin-top: 8px; }
.cp-type .und { margin-left: auto; text-decoration: underline; }
.cp-type .strike { margin: 0 8px 0 26px; text-decoration: line-through; }
.cp-type .und, .cp-type .strike { width: 15px; }
.cp-aa { display: flex; justify-content: space-between; align-items: center; }
.aa { font-size: 18px; margin-left: -5px; color: #b9b8ba; }
.aa sup { font-size: 12px; }
.selwrap { display: grid; align-items: center; }
.selwrap > * { grid-area: 1 / 1; }
.selwrap svg { justify-self: end; pointer-events: none; }
.selwrap select { appearance: none; width: 100%; height: 100%; }
.sharp { width: 117px; height: 27px; border: 2px solid #3e3d40; border-radius: 3px; background: #2c2a2d; }
.sharp select { padding-left: 7px; font-size: 13px; font-weight: 600; }
.sharp svg { margin-right: 5px; }
.cp-snap { display: flex; justify-content: flex-end; align-items: center; gap: 27px; margin: 4px 6px 0 0; height: 22px; color: #b9b8ba; }
.ag { font-size: 18px; display: flex; align-items: center; }
.ag b { border: 2px solid #b9b8ba; font-weight: 400; font-size: 16px; line-height: 14px; }
.ag2 { font-size: 18px; text-decoration: line-through; margin-right: auto; margin-left: -5px; color: #b9b8ba; }
.cp-glyph { display: flex; align-items: center; gap: 15px; margin-top: 5px; }
.cp-glyph i { width: 2px; height: 34px; background: #29272a; margin-right: 3px; }
.cp-glyph button { width: 34px; height: 34px; background: #1f1f20; border: 2px solid #3e3d40; border-radius: 4px; }

/* new document dialog */
.dialog { position: absolute; left: 175px; right: 240px; top: 2px; bottom: 23px; display: flex; flex-direction: column; background: #333135; }
.d-title { height: 41px; background: #fff; color: #1a1a1a; font: 16px/20px "Open Sans", sans-serif; display: flex; align-items: center; justify-content: space-between; padding: 0 13px 3px 11px; }
.d-tabs { height: 68px; display: flex; gap: 33px; padding-left: 37px; border-bottom: 3px solid #3e3d40; font-size: 18px; line-height: 66px; color: #a3a2a4; font-weight: 700; }
.d-tabs .active { display: flex; align-items: center; gap: 8px; color: #fff; border-bottom: 3px solid #fff; margin-bottom: -3px; }
.d-body { flex: 1; display: flex; min-height: 0; }
.d-left { flex: 1; display: flex; background: #252526; min-width: 0; }
.recent { flex: 1; display: flex; flex-direction: column; min-width: 0; padding: 26px 20px 21px 37px; }
.recent h2 { font-weight: 700; color: #d4d3d5; margin-bottom: 20px; }
.recent h2 span { color: #b9b8ba; margin-left: 3px; }
.cards { flex: 1 1 0; min-height: 0; overflow: hidden; display: grid; grid-template-columns: repeat(4, 1fr); gap: 18px; align-content: start; margin: 0 10px 10px 0; }
.card { flex-direction: column; justify-content: flex-start; aspect-ratio: 1; background: #413f42; border-radius: 6px; padding-top: 51px; color: #bcbbbd; }
.card.sel { border: 4px solid #2f7fe6; padding-top: 47px; }
.card b { margin-top: 28px; font-size: 15px; color: #dddcde; }
.card.sel b { color: #fff; }
.card span { margin-top: 5px; font-size: 14px; font-weight: 500; }
.stock { height: 80px; background: #333135; display: flex; align-items: center; justify-content: center; }
.stock input { margin: 0 15px 0 10px; width: 379px; height: 44px; padding: 0 7px 2px; border-bottom: 2px solid #3e3d40; font: 20px/24px "Liberation Sans", Arial, sans-serif; }
.stock input::placeholder { color: #69676b; opacity: 1; }
.pill { width: 100px; height: 45px; padding-bottom: 2px; border: 3px solid #d4d3d5; border-radius: 23px; font-size: 18px; font-weight: 700; color: #dddcde; }
.blue { background: #1973e8; border-color: #1973e8; color: #fff; }
.lscroll { width: 16px; margin-bottom: 114px; background: #2b292c; display: flex; flex-direction: column; align-items: center; padding-top: 8px; }
.lscroll span { width: 14px; height: 423px; margin: 4px 0 auto; border-radius: 7px; background: #413f42; }
.preset { width: 432px; display: flex; flex-direction: column; align-items: flex-start; padding: 24px 27px 38px 28px; }
.preset h2, .preset label, .lab { color: #b3b2b4; font-weight: 500; line-height: 20px; }
.docname, .box, .spin input { font: 20px/24px "Liberation Sans", Arial, sans-serif; color: #e6e5e7; }
.docname { width: 100%; height: 43px; margin-top: 16px; padding: 0 9px 4px; border-bottom: 2px solid #434145; }
.frow { width: 100%; display: flex; align-items: flex-end; gap: 17px; }
.r1 { margin-top: 16px; }
.r2 { margin-top: 16px; }
.fld { display: flex; flex-direction: column; gap: 7px; width: 123px; }
.box { width: 100%; height: 44px; padding: 0 11px; background: #252526; border: 2px solid #434145; border-radius: 6px; }
.focus { border-color: #3b8eed; border-bottom-color: #2a4668; }
.units { flex: 1; height: 44px; border: 2px solid #434145; border-radius: 6px; }
.units select { padding-left: 15px; font-size: 18px; font-weight: 700; color: #d4d3d5; }
.units svg { margin-right: 15px; color: #c4c3c5; }
.orient { width: 80px; align-self: stretch; white-space: nowrap; }
.orient div { display: flex; align-items: center; gap: 9px; margin-top: 10px; }
.boards { flex: 1; }
.spin { display: flex; height: 44px; border: 2px solid #434145; border-radius: 6px; overflow: hidden; }
.spin .arr { width: 28px; border-color: #434145; }
.spin .off { background: #413f42; color: #636165; }
.spin input { flex: 1; width: 40px; padding-left: 11px; background: #252526; }
.bleed { margin-top: 12px; }
.bleeds { position: relative; display: flex; align-items: center; gap: 18px; margin-top: 15px; }
.bgrid { display: grid; grid-template-columns: 123px 123px; gap: 8px 17px; }
.bgrid .fld { width: auto; }
.link { width: 46px; height: 46px; margin-top: 26px; border-radius: 6px; background: #413f42; border: 2px solid #48464a; }
.ibeam { position: absolute; left: 75px; top: 36px; }
.adv { margin: 16px 0 0 4px; gap: 8px; color: #b9b8ba; font-size: 15px; font-weight: 500; }
.mode { margin-top: 21px; color: #b3b2b4; }
.more { margin-top: 25px; width: 157px; height: 44px; border: 2px solid #434145; border-radius: 4px; font: 18px/24px "Open Sans", sans-serif; color: #dddcde; }
.actions { margin-top: auto; align-self: flex-end; display: flex; gap: 23px; }

/* meeting overlays */
.banner { position: absolute; left: 841px; top: 0; height: 27px; display: flex; border-radius: 0 0 5px 5px; overflow: hidden; box-shadow: 0 2px 4px rgba(0, 0, 0, .3); font: 700 14px/27px "Open Sans", sans-serif; background: #222325; color: #fff; }
.banner span { width: 333px; text-align: center; background: #23d959; color: #2c4033; }
.banner button { width: 152px; gap: 20px; padding-left: 6px; }
.chips { position: absolute; top: 10px; display: flex; gap: 10px; font: 15px/30px "Open Sans", sans-serif; color: #fff; }
.chips.left { left: 10px; }
.chips.right { right: 11px; }
.chip { height: 30px; padding: 0 10px; border-radius: 8px; background: rgba(34, 34, 35, .85); display: flex; align-items: center; gap: 7px; }
.shield { padding: 0 6px; }
.rec { padding: 0 8px 0 10px; gap: 10px; }
.rec i { width: 10px; height: 10px; border-radius: 5px; background: #e02828; }
.annotate { position: absolute; left: 15px; bottom: 15px; width: 49px; height: 49px; border-radius: 25px; background: #141b1e; }

/* meeting toolbar */
.meet { height: 67px; display: flex; align-items: center; background: #1b1b1b; color: #c0c0c0; font: 14px/20px "Open Sans", sans-serif; }
.mi { display: grid; grid-template-columns: 1fr 30px 1fr; grid-template-rows: 30px 24px; margin-top: 4px; }
.main { grid-area: 1 / 1 / 3 / 4; flex-direction: column; justify-content: space-between; white-space: nowrap; }
.car { grid-area: 1 / 3; justify-self: start; align-self: center; margin-left: 18px; height: 20px; width: 18px; }
.far { margin-left: 42px; }
.cnt { margin-left: 6px; margin-top: -4px; }
.green { color: #23d959; }
.cc { width: 30px; height: 24px; margin-top: 3px; border-radius: 4px; background: #a9a9a9; color: #1b1b1b; font: 700 13px/24px "Open Sans", sans-serif; }
.mid { display: flex; margin: 0 auto 0 245px; }
.wa { width: 114px; }
.wb { width: 120px; }
.w1 { width: 148px; margin-left: 10px; }
.w2 { width: 128px; }
.w3, .w9 { width: 108px; }
.w4 { width: 116px; }
.w5 { width: 104px; }
.w6 { width: 114px; }
.w7 { width: 88px; }
.w8 { width: 136px; }
.leave { width: 77px; height: 34px; margin: 0 15px 0 0; border-radius: 8px; background: #b92626; color: #fff; font-weight: 700; }
```
